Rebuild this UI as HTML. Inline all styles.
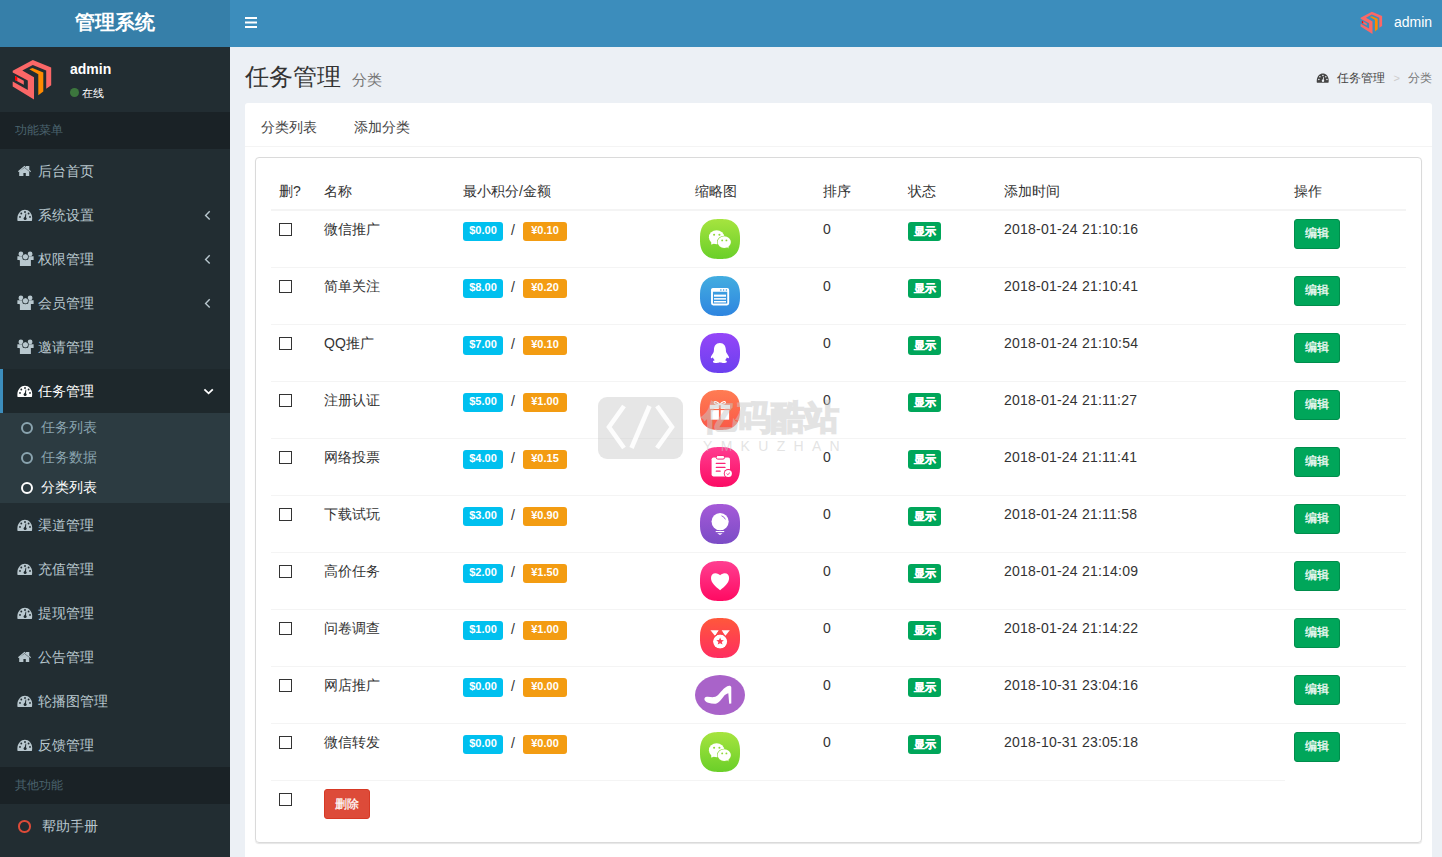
<!DOCTYPE html>
<html><head><meta charset="utf-8"><style>
*{box-sizing:border-box;margin:0;padding:0}
html,body{width:1442px;height:857px;overflow:hidden;background:#ecf0f5;font-family:"Liberation Sans",sans-serif;color:#333;font-size:14px}
.abs{position:absolute}
#logo{position:absolute;left:0;top:0;width:230px;height:47px;background:#367fa9;color:#fff;font-size:20px;font-weight:bold;text-align:center;line-height:45px}
#nav{position:absolute;left:230px;top:0;width:1212px;height:47px;background:#3c8dbc}
#side{position:absolute;left:0;top:47px;width:230px;height:810px;background:#222d32}
.hdr{position:absolute;left:0;width:230px;height:36px;background:#1a2226;color:#4b646f;font-size:12px;line-height:36px;padding-left:15px}
.mi{position:absolute;left:0;width:230px;height:44px;color:#b8c7ce;line-height:44px}
.mic{position:absolute;left:14px;top:11px;width:24px;height:24px;display:block}
.mic svg{position:absolute;top:0;left:0}
.mt{position:absolute;left:38px;top:0}
.chl{position:absolute;left:196px;top:11px;width:24px;height:24px}
.chl svg{position:absolute;top:0;left:0}
.sub{position:absolute;left:0;width:230px;height:30px;color:#8aa4af;line-height:30px}
.sub .o{position:absolute;left:21px;top:10px;width:12px;height:12px;border:2px solid #8aa4af;border-radius:50%}
.sub span.t{position:absolute;left:41px}
#content{position:absolute;left:230px;top:47px;width:1212px;height:810px}
.box{position:absolute;left:245px;top:103px;width:1187px;height:800px;background:#fff;border-radius:3px}
.inner{position:absolute;left:255px;top:157px;width:1167px;height:686px;border:1px solid #dadada;border-radius:4px;box-shadow:0 1px 1px rgba(0,0,0,.1)}
.th{position:absolute;top:182px;font-weight:normal;color:#333;font-size:14px;line-height:18px}
.hl{position:absolute;left:271px;top:209px;width:1135px;height:2px;background:#f4f4f4}
.rl{position:absolute;left:271px;width:1135px;height:1px;background:#f4f4f4}
.cb{position:absolute;left:279px;width:13px;height:13px;border:1.5px solid #333;background:#fff}
.td{position:absolute;font-size:14px;line-height:16px;color:#333}
.bi,.bw{position:absolute;height:19px;border-radius:3px;color:#fff;font-weight:bold;font-size:11px;line-height:17px;text-align:center}
.bi{left:463px;width:40px;background:#00c0ef}
.bw{left:523px;width:44px;background:#f39c12}
.ic{position:absolute;left:700px;width:40px;height:40px;overflow:hidden}
.ic svg{position:absolute;left:0;top:0}
.bs{position:absolute;left:908px;width:33px;height:19px;border-radius:3px;background:#00a65a;color:#fff;font-weight:bold;font-size:11px;line-height:18px;text-align:center;-webkit-text-stroke:.35px #fff}
.be{position:absolute;left:1294px;width:46px;height:30px;border-radius:3px;background:#00a65a;border:1px solid #008d4c;color:#fff;font-size:12px;line-height:27px;text-align:center;-webkit-text-stroke:.25px #fff}
</style></head><body>
<div id="logo">管理系统</div>
<div id="nav">
 <svg class="abs" style="left:15px;top:17px" width="12" height="11" viewBox="0 0 12 11"><g fill="#fff"><rect y="0" width="12" height="2"/><rect y="4.5" width="12" height="2"/><rect y="9" width="12" height="2"/></g></svg>
 <div class="abs" style="left:1127.8px;top:9px;width:50px;height:50px;transform:scale(.558);transform-origin:0 0"><svg width="50" height="50" viewBox="0 0 50 50"><path fill="#fb6767" d="M4.7 15.8L24.8 5 43.2 12.5V30.3L38.2 33.8V15.5L24.8 9.9 14.3 15.5 26 22.2V44.6L4.7 31.5V26.5L19.8 35V25.5L4.7 17.5z"/><path fill="#fb6767" d="M7 21L15.8 25.8V29.7L7 25z"/><path fill="#f00" d="M7 21L9.3 22.3V26.2L7 25z"/><path fill="#ff8a00" d="M21.3 14.3L24.5 12.9 35.3 17.6V36.5L30.3 40.3V19.2z"/></svg></div>
 <div class="abs" style="left:1164px;top:13px;color:#fff;font-size:14px;line-height:18px">admin</div>
</div>
<div id="side">
 <div class="abs" style="left:8px;top:8px"><svg width="50" height="50" viewBox="0 0 50 50"><path fill="#fb6767" d="M4.7 15.8L24.8 5 43.2 12.5V30.3L38.2 33.8V15.5L24.8 9.9 14.3 15.5 26 22.2V44.6L4.7 31.5V26.5L19.8 35V25.5L4.7 17.5z"/><path fill="#fb6767" d="M7 21L15.8 25.8V29.7L7 25z"/><path fill="#f00" d="M7 21L9.3 22.3V26.2L7 25z"/><path fill="#ff8a00" d="M21.3 14.3L24.5 12.9 35.3 17.6V36.5L30.3 40.3V19.2z"/></svg></div>
 <div class="abs" style="left:70px;top:13px;color:#fff;font-weight:bold;font-size:14px;line-height:18px">admin</div>
 <div class="abs" style="left:70px;top:41px;width:9px;height:9px;border-radius:50%;background:#3c763d"></div>
 <div class="abs" style="left:82px;top:39px;color:#fff;font-size:11px;line-height:14px">在线</div>
 <div class="hdr" style="top:65px;height:36.5px;line-height:36px">功能菜单</div>
</div>
<div class="abs" style="left:0;top:0;width:230px;height:857px">
 <div class="mi" style="top:149px"><span class="mic"><svg width="24" height="24" viewBox="0 0 24 24"><path fill="currentColor" d="M3.9 11.3 L10.5 5.7 L12 7 V5.9 H15.3 V9.8 L17.1 11.3 L16.3 12 L10.5 7.2 L4.7 12z M5.2 16.1 V11.5 L10.5 7.7 L15.2 11.5 V16.1 H11.8 V12.9 H9.4 V16.1z"/></svg></span><span class="mt">后台首页</span></div><div class="mi" style="top:193px"><span class="mic"><svg width="24" height="24" viewBox="0 0 24 24"><path fill="currentColor" d="M3.6 17.1 C3.3 16 3.3 15 3.4 13.8 C3.8 9 7.2 5.7 10.9 5.7 C14.8 5.7 18 9 18.2 13.8 C18.2 15 18.1 16 17.8 17.1z"/><g fill="#222d32"><circle cx="11" cy="8" r=".95"/><circle cx="7.3" cy="9.5" r=".95"/><circle cx="14.6" cy="9.5" r=".95"/><circle cx="6" cy="12.9" r=".95"/><circle cx="16" cy="12.9" r=".95"/><circle cx="11.1" cy="14.5" r="1.5"/><path d="M10.5 14.3 L11.6 9.6 L12.3 9.8 L11.9 14.5z"/></g></svg></span><span class="mt">系统设置</span><span class=chl><svg width="24" height="24" viewBox="0 0 24 24"><path d="M13.7 7.3L9.6 11.4l4.1 4.1" stroke="#b8c7ce" stroke-width="1.4" fill="none"/></svg></span></div><div class="mi" style="top:237px"><span class="mic"><svg width="24" height="24" viewBox="0 0 24 24"><g fill="currentColor"><circle cx="6.9" cy="5.9" r="2.4"/><circle cx="16.1" cy="5.9" r="2.4"/><path d="M3.4 8.3 H8.6 L8.9 12 H3.4z"/><path d="M14.4 8.3 H19.6 V12 H14.1z"/><circle cx="11.4" cy="8.8" r="2.8"/><path d="M5.9 12.2 C5.9 11.8 6.3 11.7 7 11.7 H15.8 C16.5 11.7 16.9 11.8 16.9 12.2 V18 H5.9z"/></g><g fill="none" stroke="#222d32" stroke-width=".6"><circle cx="11.4" cy="8.8" r="3.1"/></g></svg></span><span class="mt">权限管理</span><span class=chl><svg width="24" height="24" viewBox="0 0 24 24"><path d="M13.7 7.3L9.6 11.4l4.1 4.1" stroke="#b8c7ce" stroke-width="1.4" fill="none"/></svg></span></div><div class="mi" style="top:281px"><span class="mic"><svg width="24" height="24" viewBox="0 0 24 24"><g fill="currentColor"><circle cx="6.9" cy="5.9" r="2.4"/><circle cx="16.1" cy="5.9" r="2.4"/><path d="M3.4 8.3 H8.6 L8.9 12 H3.4z"/><path d="M14.4 8.3 H19.6 V12 H14.1z"/><circle cx="11.4" cy="8.8" r="2.8"/><path d="M5.9 12.2 C5.9 11.8 6.3 11.7 7 11.7 H15.8 C16.5 11.7 16.9 11.8 16.9 12.2 V18 H5.9z"/></g><g fill="none" stroke="#222d32" stroke-width=".6"><circle cx="11.4" cy="8.8" r="3.1"/></g></svg></span><span class="mt">会员管理</span><span class=chl><svg width="24" height="24" viewBox="0 0 24 24"><path d="M13.7 7.3L9.6 11.4l4.1 4.1" stroke="#b8c7ce" stroke-width="1.4" fill="none"/></svg></span></div><div class="mi" style="top:325px"><span class="mic"><svg width="24" height="24" viewBox="0 0 24 24"><g fill="currentColor"><circle cx="6.9" cy="5.9" r="2.4"/><circle cx="16.1" cy="5.9" r="2.4"/><path d="M3.4 8.3 H8.6 L8.9 12 H3.4z"/><path d="M14.4 8.3 H19.6 V12 H14.1z"/><circle cx="11.4" cy="8.8" r="2.8"/><path d="M5.9 12.2 C5.9 11.8 6.3 11.7 7 11.7 H15.8 C16.5 11.7 16.9 11.8 16.9 12.2 V18 H5.9z"/></g><g fill="none" stroke="#222d32" stroke-width=".6"><circle cx="11.4" cy="8.8" r="3.1"/></g></svg></span><span class="mt">邀请管理</span></div><div class="mi" style="top:503px"><span class="mic"><svg width="24" height="24" viewBox="0 0 24 24"><path fill="currentColor" d="M3.6 17.1 C3.3 16 3.3 15 3.4 13.8 C3.8 9 7.2 5.7 10.9 5.7 C14.8 5.7 18 9 18.2 13.8 C18.2 15 18.1 16 17.8 17.1z"/><g fill="#222d32"><circle cx="11" cy="8" r=".95"/><circle cx="7.3" cy="9.5" r=".95"/><circle cx="14.6" cy="9.5" r=".95"/><circle cx="6" cy="12.9" r=".95"/><circle cx="16" cy="12.9" r=".95"/><circle cx="11.1" cy="14.5" r="1.5"/><path d="M10.5 14.3 L11.6 9.6 L12.3 9.8 L11.9 14.5z"/></g></svg></span><span class="mt">渠道管理</span></div><div class="mi" style="top:547px"><span class="mic"><svg width="24" height="24" viewBox="0 0 24 24"><path fill="currentColor" d="M3.6 17.1 C3.3 16 3.3 15 3.4 13.8 C3.8 9 7.2 5.7 10.9 5.7 C14.8 5.7 18 9 18.2 13.8 C18.2 15 18.1 16 17.8 17.1z"/><g fill="#222d32"><circle cx="11" cy="8" r=".95"/><circle cx="7.3" cy="9.5" r=".95"/><circle cx="14.6" cy="9.5" r=".95"/><circle cx="6" cy="12.9" r=".95"/><circle cx="16" cy="12.9" r=".95"/><circle cx="11.1" cy="14.5" r="1.5"/><path d="M10.5 14.3 L11.6 9.6 L12.3 9.8 L11.9 14.5z"/></g></svg></span><span class="mt">充值管理</span></div><div class="mi" style="top:591px"><span class="mic"><svg width="24" height="24" viewBox="0 0 24 24"><path fill="currentColor" d="M3.6 17.1 C3.3 16 3.3 15 3.4 13.8 C3.8 9 7.2 5.7 10.9 5.7 C14.8 5.7 18 9 18.2 13.8 C18.2 15 18.1 16 17.8 17.1z"/><g fill="#222d32"><circle cx="11" cy="8" r=".95"/><circle cx="7.3" cy="9.5" r=".95"/><circle cx="14.6" cy="9.5" r=".95"/><circle cx="6" cy="12.9" r=".95"/><circle cx="16" cy="12.9" r=".95"/><circle cx="11.1" cy="14.5" r="1.5"/><path d="M10.5 14.3 L11.6 9.6 L12.3 9.8 L11.9 14.5z"/></g></svg></span><span class="mt">提现管理</span></div><div class="mi" style="top:635px"><span class="mic"><svg width="24" height="24" viewBox="0 0 24 24"><path fill="currentColor" d="M3.9 11.3 L10.5 5.7 L12 7 V5.9 H15.3 V9.8 L17.1 11.3 L16.3 12 L10.5 7.2 L4.7 12z M5.2 16.1 V11.5 L10.5 7.7 L15.2 11.5 V16.1 H11.8 V12.9 H9.4 V16.1z"/></svg></span><span class="mt">公告管理</span></div><div class="mi" style="top:679px"><span class="mic"><svg width="24" height="24" viewBox="0 0 24 24"><path fill="currentColor" d="M3.6 17.1 C3.3 16 3.3 15 3.4 13.8 C3.8 9 7.2 5.7 10.9 5.7 C14.8 5.7 18 9 18.2 13.8 C18.2 15 18.1 16 17.8 17.1z"/><g fill="#222d32"><circle cx="11" cy="8" r=".95"/><circle cx="7.3" cy="9.5" r=".95"/><circle cx="14.6" cy="9.5" r=".95"/><circle cx="6" cy="12.9" r=".95"/><circle cx="16" cy="12.9" r=".95"/><circle cx="11.1" cy="14.5" r="1.5"/><path d="M10.5 14.3 L11.6 9.6 L12.3 9.8 L11.9 14.5z"/></g></svg></span><span class="mt">轮播图管理</span></div><div class="mi" style="top:723px"><span class="mic"><svg width="24" height="24" viewBox="0 0 24 24"><path fill="currentColor" d="M3.6 17.1 C3.3 16 3.3 15 3.4 13.8 C3.8 9 7.2 5.7 10.9 5.7 C14.8 5.7 18 9 18.2 13.8 C18.2 15 18.1 16 17.8 17.1z"/><g fill="#222d32"><circle cx="11" cy="8" r=".95"/><circle cx="7.3" cy="9.5" r=".95"/><circle cx="14.6" cy="9.5" r=".95"/><circle cx="6" cy="12.9" r=".95"/><circle cx="16" cy="12.9" r=".95"/><circle cx="11.1" cy="14.5" r="1.5"/><path d="M10.5 14.3 L11.6 9.6 L12.3 9.8 L11.9 14.5z"/></g></svg></span><span class="mt">反馈管理</span></div>
 <div class="abs" style="left:0;top:369px;width:230px;height:44px;background:#1e282c;border-left:3px solid #3c8dbc"></div>
 <div class="mi" style="top:369px;color:#fff"><span class="mic"><svg width="24" height="24" viewBox="0 0 24 24"><path fill="currentColor" d="M3.6 17.1 C3.3 16 3.3 15 3.4 13.8 C3.8 9 7.2 5.7 10.9 5.7 C14.8 5.7 18 9 18.2 13.8 C18.2 15 18.1 16 17.8 17.1z"/><g fill="#1e282c"><circle cx="11" cy="8" r=".95"/><circle cx="7.3" cy="9.5" r=".95"/><circle cx="14.6" cy="9.5" r=".95"/><circle cx="6" cy="12.9" r=".95"/><circle cx="16" cy="12.9" r=".95"/><circle cx="11.1" cy="14.5" r="1.5"/><path d="M10.5 14.3 L11.6 9.6 L12.3 9.8 L11.9 14.5z"/></g></svg></span><span class="mt">任务管理</span><span class="chl"><svg width="24" height="24" viewBox="0 0 24 24"><path d="M8.4 9.3l4.2 4 4.2-4" stroke="#fff" stroke-width="1.8" fill="none"/></svg></span></div>
 <div class="abs" style="left:0;top:413px;width:230px;height:90px;background:#2c3b41"></div>
 <div class="sub" style="top:412px"><span class="o"></span><span class="t">任务列表</span></div>
 <div class="sub" style="top:442px"><span class="o"></span><span class="t">任务数据</span></div>
 <div class="sub" style="top:472px;color:#fff"><span class="o" style="border-color:#fff"></span><span class="t">分类列表</span></div>
 <div class="hdr" style="top:767px;height:37px;line-height:36px">其他功能</div>
 <div class="mi" style="top:804px"><span class="abs" style="left:18px;top:16px;width:12.5px;height:12.5px;border:2.2px solid #dd4b39;border-radius:50%"></span><span class="mt" style="left:42px">帮助手册</span></div>
</div>
<div class="abs" style="left:245px;top:62px;font-size:24px;line-height:30px;color:#333">任务管理</div>
<div class="abs" style="left:352px;top:71px;font-size:15px;line-height:18px;color:#777">分类</div>
<div class="abs" style="left:1314.2px;top:69.2px;width:24px;height:24px;color:#444;transform:scale(.81);transform-origin:0 0"><svg width="24" height="24" viewBox="0 0 24 24"><path fill="currentColor" d="M3.6 17.1 C3.3 16 3.3 15 3.4 13.8 C3.8 9 7.2 5.7 10.9 5.7 C14.8 5.7 18 9 18.2 13.8 C18.2 15 18.1 16 17.8 17.1z"/><g fill="#ecf0f5"><circle cx="11" cy="8" r=".95"/><circle cx="7.3" cy="9.5" r=".95"/><circle cx="14.6" cy="9.5" r=".95"/><circle cx="6" cy="12.9" r=".95"/><circle cx="16" cy="12.9" r=".95"/><circle cx="11.1" cy="14.5" r="1.5"/><path d="M10.5 14.3 L11.6 9.6 L12.3 9.8 L11.9 14.5z"/></g></svg></div>
<div class="abs" style="left:1337px;top:70.5px;font-size:12px;line-height:14px;color:#444">任务管理</div>
<div class="abs" style="left:1393.5px;top:71px;font-size:11px;line-height:14px;color:#ccc">&gt;</div>
<div class="abs" style="left:1408px;top:70.5px;font-size:12px;line-height:14px;color:#777">分类</div>
<div class="box"></div>
<div class="abs" style="left:245px;top:146px;width:1187px;height:1px;background:#f4f4f4"></div>
<div class="abs" style="left:261px;top:119px;font-size:14px;line-height:16px;color:#444">分类列表</div>
<div class="abs" style="left:354px;top:119px;font-size:14px;line-height:16px;color:#444">添加分类</div>
<div class="inner"></div>
<div class="th" style="left:279px">删?</div>
<div class="th" style="left:324px">名称</div>
<div class="th" style="left:463px">最小积分/金额</div>
<div class="th" style="left:695px">缩略图</div>
<div class="th" style="left:823px">排序</div>
<div class="th" style="left:908px">状态</div>
<div class="th" style="left:1004px">添加时间</div>
<div class="th" style="left:1294px">操作</div>
<div class="hl"></div>

<div class="rl" style="top:267px;"></div>
<div class="cb" style="top:223px"></div>
<div class="td" style="left:324px;top:221px">微信推广</div>
<div class="bi" style="top:222px">$0.00</div>
<div class="td" style="left:511px;top:222px">/</div>
<div class="bw" style="top:222px">¥0.10</div>
<div class="ic" style="top:219px;"><svg width="40" height="40" viewBox="0 0 40 40"><defs><linearGradient id="g1" x1="0" y1="0" x2="0" y2="1"><stop offset="0" stop-color="#a6e43f"/><stop offset="1" stop-color="#6acf29"/></linearGradient></defs><path fill="url(#g1)" d="M40.00 20.00 L39.97 22.45 L39.87 24.18 L39.70 25.69 L39.47 27.07 L39.18 28.35 L38.82 29.55 L38.39 30.68 L37.91 31.73 L37.35 32.73 L36.74 33.65 L36.06 34.52 L35.32 35.32 L34.52 36.06 L33.65 36.74 L32.73 37.35 L31.73 37.91 L30.68 38.39 L29.55 38.82 L28.35 39.18 L27.07 39.47 L25.69 39.70 L24.18 39.87 L22.45 39.97 L20.00 40.00 L17.55 39.97 L15.82 39.87 L14.31 39.70 L12.93 39.47 L11.65 39.18 L10.45 38.82 L9.32 38.39 L8.27 37.91 L7.27 37.35 L6.35 36.74 L5.48 36.06 L4.68 35.32 L3.94 34.52 L3.26 33.65 L2.65 32.73 L2.09 31.73 L1.61 30.68 L1.18 29.55 L0.82 28.35 L0.53 27.07 L0.30 25.69 L0.13 24.18 L0.03 22.45 L0.00 20.00 L0.03 17.55 L0.13 15.82 L0.30 14.31 L0.53 12.93 L0.82 11.65 L1.18 10.45 L1.61 9.32 L2.09 8.27 L2.65 7.27 L3.26 6.35 L3.94 5.48 L4.68 4.68 L5.48 3.94 L6.35 3.26 L7.27 2.65 L8.27 2.09 L9.32 1.61 L10.45 1.18 L11.65 0.82 L12.93 0.53 L14.31 0.30 L15.82 0.13 L17.55 0.03 L20.00 0.00 L22.45 0.03 L24.18 0.13 L25.69 0.30 L27.07 0.53 L28.35 0.82 L29.55 1.18 L30.68 1.61 L31.73 2.09 L32.73 2.65 L33.65 3.26 L34.52 3.94 L35.32 4.68 L36.06 5.48 L36.74 6.35 L37.35 7.27 L37.91 8.27 L38.39 9.32 L38.82 10.45 L39.18 11.65 L39.47 12.93 L39.70 14.31 L39.87 15.82 L39.97 17.55Z"/><g fill="#fff"><ellipse cx="16.6" cy="18.3" rx="7.7" ry="7"/><path d="M11 23.5 L11.5 25.8 L14.5 24z"/><ellipse cx="24.25" cy="23.1" rx="7.2" ry="6.4" fill="#8bd736"/><ellipse cx="24.25" cy="23.1" rx="6.65" ry="5.95"/><path d="M26.5 27.5 L28.6 29.6 L28.2 26.5z"/></g><g fill="#8fd838"><circle cx="14.1" cy="15.8" r="1.05"/><circle cx="19.4" cy="15.8" r="1.05"/><circle cx="22.2" cy="21.4" r=".95"/><circle cx="26.4" cy="21.4" r=".95"/></g></svg></div>
<div class="td" style="left:823px;top:221px">0</div>
<div class="bs" style="top:222px">显示</div>
<div class="td" style="left:1004px;top:221px;letter-spacing:.22px">2018-01-24 21:10:16</div>
<div class="be" style="top:219px">编辑</div>

<div class="rl" style="top:324px;"></div>
<div class="cb" style="top:280px"></div>
<div class="td" style="left:324px;top:278px">简单关注</div>
<div class="bi" style="top:279px">$8.00</div>
<div class="td" style="left:511px;top:279px">/</div>
<div class="bw" style="top:279px">¥0.20</div>
<div class="ic" style="top:276px;"><svg width="40" height="40" viewBox="0 0 40 40"><defs><linearGradient id="g2" x1="0" y1="0" x2="0" y2="1"><stop offset="0" stop-color="#43ade0"/><stop offset="1" stop-color="#2e85e0"/></linearGradient></defs><path fill="url(#g2)" d="M40.00 20.00 L39.97 22.45 L39.87 24.18 L39.70 25.69 L39.47 27.07 L39.18 28.35 L38.82 29.55 L38.39 30.68 L37.91 31.73 L37.35 32.73 L36.74 33.65 L36.06 34.52 L35.32 35.32 L34.52 36.06 L33.65 36.74 L32.73 37.35 L31.73 37.91 L30.68 38.39 L29.55 38.82 L28.35 39.18 L27.07 39.47 L25.69 39.70 L24.18 39.87 L22.45 39.97 L20.00 40.00 L17.55 39.97 L15.82 39.87 L14.31 39.70 L12.93 39.47 L11.65 39.18 L10.45 38.82 L9.32 38.39 L8.27 37.91 L7.27 37.35 L6.35 36.74 L5.48 36.06 L4.68 35.32 L3.94 34.52 L3.26 33.65 L2.65 32.73 L2.09 31.73 L1.61 30.68 L1.18 29.55 L0.82 28.35 L0.53 27.07 L0.30 25.69 L0.13 24.18 L0.03 22.45 L0.00 20.00 L0.03 17.55 L0.13 15.82 L0.30 14.31 L0.53 12.93 L0.82 11.65 L1.18 10.45 L1.61 9.32 L2.09 8.27 L2.65 7.27 L3.26 6.35 L3.94 5.48 L4.68 4.68 L5.48 3.94 L6.35 3.26 L7.27 2.65 L8.27 2.09 L9.32 1.61 L10.45 1.18 L11.65 0.82 L12.93 0.53 L14.31 0.30 L15.82 0.13 L17.55 0.03 L20.00 0.00 L22.45 0.03 L24.18 0.13 L25.69 0.30 L27.07 0.53 L28.35 0.82 L29.55 1.18 L30.68 1.61 L31.73 2.09 L32.73 2.65 L33.65 3.26 L34.52 3.94 L35.32 4.68 L36.06 5.48 L36.74 6.35 L37.35 7.27 L37.91 8.27 L38.39 9.32 L38.82 10.45 L39.18 11.65 L39.47 12.93 L39.70 14.31 L39.87 15.82 L39.97 17.55Z"/><rect x="12" y="12.9" width="16.2" height="15.6" rx="1.2" fill="none" stroke="#fff" stroke-width="1.9"/><rect x="11.5" y="12.4" width="17" height="3.4" fill="#fff" rx="1"/><g fill="#3a98e0"><circle cx="20.9" cy="14.1" r=".75"/><circle cx="23.6" cy="14.1" r=".75"/><circle cx="26.4" cy="14.1" r=".75"/></g><g fill="#fff"><rect x="14" y="18.6" width="12" height="2.1"/><rect x="14" y="22.1" width="12" height="1.5"/><rect x="14" y="25" width="12" height="1.5"/></g></svg></div>
<div class="td" style="left:823px;top:278px">0</div>
<div class="bs" style="top:279px">显示</div>
<div class="td" style="left:1004px;top:278px;letter-spacing:.22px">2018-01-24 21:10:41</div>
<div class="be" style="top:276px">编辑</div>

<div class="rl" style="top:381px;"></div>
<div class="cb" style="top:337px"></div>
<div class="td" style="left:324px;top:335px">QQ推广</div>
<div class="bi" style="top:336px">$7.00</div>
<div class="td" style="left:511px;top:336px">/</div>
<div class="bw" style="top:336px">¥0.10</div>
<div class="ic" style="top:333px;"><svg width="40" height="40" viewBox="0 0 40 40"><defs><linearGradient id="g3" x1="0" y1="0" x2="0" y2="1"><stop offset="0" stop-color="#9546f8"/><stop offset="1" stop-color="#6b40ef"/></linearGradient></defs><path fill="url(#g3)" d="M40.00 20.00 L39.97 22.45 L39.87 24.18 L39.70 25.69 L39.47 27.07 L39.18 28.35 L38.82 29.55 L38.39 30.68 L37.91 31.73 L37.35 32.73 L36.74 33.65 L36.06 34.52 L35.32 35.32 L34.52 36.06 L33.65 36.74 L32.73 37.35 L31.73 37.91 L30.68 38.39 L29.55 38.82 L28.35 39.18 L27.07 39.47 L25.69 39.70 L24.18 39.87 L22.45 39.97 L20.00 40.00 L17.55 39.97 L15.82 39.87 L14.31 39.70 L12.93 39.47 L11.65 39.18 L10.45 38.82 L9.32 38.39 L8.27 37.91 L7.27 37.35 L6.35 36.74 L5.48 36.06 L4.68 35.32 L3.94 34.52 L3.26 33.65 L2.65 32.73 L2.09 31.73 L1.61 30.68 L1.18 29.55 L0.82 28.35 L0.53 27.07 L0.30 25.69 L0.13 24.18 L0.03 22.45 L0.00 20.00 L0.03 17.55 L0.13 15.82 L0.30 14.31 L0.53 12.93 L0.82 11.65 L1.18 10.45 L1.61 9.32 L2.09 8.27 L2.65 7.27 L3.26 6.35 L3.94 5.48 L4.68 4.68 L5.48 3.94 L6.35 3.26 L7.27 2.65 L8.27 2.09 L9.32 1.61 L10.45 1.18 L11.65 0.82 L12.93 0.53 L14.31 0.30 L15.82 0.13 L17.55 0.03 L20.00 0.00 L22.45 0.03 L24.18 0.13 L25.69 0.30 L27.07 0.53 L28.35 0.82 L29.55 1.18 L30.68 1.61 L31.73 2.09 L32.73 2.65 L33.65 3.26 L34.52 3.94 L35.32 4.68 L36.06 5.48 L36.74 6.35 L37.35 7.27 L37.91 8.27 L38.39 9.32 L38.82 10.45 L39.18 11.65 L39.47 12.93 L39.70 14.31 L39.87 15.82 L39.97 17.55Z"/><path fill="#fff" d="M19.9 9.9 C15.8 9.9 14.2 13 14 16 C13.9 18 13.8 19 13.2 20 C12.2 21.5 10.8 23.4 10.8 24.5 C10.8 25.2 11.3 25.4 12 25 C12.4 24.8 12.6 24.6 12.9 24.3 C13.1 25.3 13.8 26.4 14.8 27.2 C13.3 27.6 12.8 28.3 13 29 C13.4 30 15.3 30.1 17 30 C18.3 29.9 19 29.5 19.9 29.3 C20.8 29.5 21.5 29.9 22.8 30 C24.5 30.1 26.4 30 26.8 29 C27 28.3 26.5 27.6 25 27.2 C26 26.4 26.7 25.3 26.9 24.3 C27.2 24.6 27.4 24.8 27.8 25 C28.5 25.4 29 25.2 29 24.5 C29 23.4 27.6 21.5 26.6 20 C26 19 25.9 18 25.8 16 C25.6 13 24 9.9 19.9 9.9z"/></svg></div>
<div class="td" style="left:823px;top:335px">0</div>
<div class="bs" style="top:336px">显示</div>
<div class="td" style="left:1004px;top:335px;letter-spacing:.22px">2018-01-24 21:10:54</div>
<div class="be" style="top:333px">编辑</div>

<div class="rl" style="top:438px;"></div>
<div class="cb" style="top:394px"></div>
<div class="td" style="left:324px;top:392px">注册认证</div>
<div class="bi" style="top:393px">$5.00</div>
<div class="td" style="left:511px;top:393px">/</div>
<div class="bw" style="top:393px">¥1.00</div>
<div class="ic" style="top:390px;"><svg width="40" height="40" viewBox="0 0 40 40"><defs><linearGradient id="g4" x1="0" y1="0" x2="0" y2="1"><stop offset="0" stop-color="#ff7c53"/><stop offset="1" stop-color="#fa5847"/></linearGradient></defs><path fill="url(#g4)" d="M40.00 20.00 L39.97 22.45 L39.87 24.18 L39.70 25.69 L39.47 27.07 L39.18 28.35 L38.82 29.55 L38.39 30.68 L37.91 31.73 L37.35 32.73 L36.74 33.65 L36.06 34.52 L35.32 35.32 L34.52 36.06 L33.65 36.74 L32.73 37.35 L31.73 37.91 L30.68 38.39 L29.55 38.82 L28.35 39.18 L27.07 39.47 L25.69 39.70 L24.18 39.87 L22.45 39.97 L20.00 40.00 L17.55 39.97 L15.82 39.87 L14.31 39.70 L12.93 39.47 L11.65 39.18 L10.45 38.82 L9.32 38.39 L8.27 37.91 L7.27 37.35 L6.35 36.74 L5.48 36.06 L4.68 35.32 L3.94 34.52 L3.26 33.65 L2.65 32.73 L2.09 31.73 L1.61 30.68 L1.18 29.55 L0.82 28.35 L0.53 27.07 L0.30 25.69 L0.13 24.18 L0.03 22.45 L0.00 20.00 L0.03 17.55 L0.13 15.82 L0.30 14.31 L0.53 12.93 L0.82 11.65 L1.18 10.45 L1.61 9.32 L2.09 8.27 L2.65 7.27 L3.26 6.35 L3.94 5.48 L4.68 4.68 L5.48 3.94 L6.35 3.26 L7.27 2.65 L8.27 2.09 L9.32 1.61 L10.45 1.18 L11.65 0.82 L12.93 0.53 L14.31 0.30 L15.82 0.13 L17.55 0.03 L20.00 0.00 L22.45 0.03 L24.18 0.13 L25.69 0.30 L27.07 0.53 L28.35 0.82 L29.55 1.18 L30.68 1.61 L31.73 2.09 L32.73 2.65 L33.65 3.26 L34.52 3.94 L35.32 4.68 L36.06 5.48 L36.74 6.35 L37.35 7.27 L37.91 8.27 L38.39 9.32 L38.82 10.45 L39.18 11.65 L39.47 12.93 L39.70 14.31 L39.87 15.82 L39.97 17.55Z"/><g fill="#fff"><rect x="9.9" y="14.9" width="20.1" height="4"/><rect x="10.75" y="20.1" width="18.35" height="9.6"/></g><rect x="18.9" y="14.5" width="1.8" height="16" fill="#fc6a4d"/><path d="M19.8 14.6 C17.5 11.5 14.5 10.8 14.2 12.4 C14 13.6 16 14.4 19.8 14.6 C23.6 14.4 25.6 13.6 25.4 12.4 C25.1 10.8 22.1 11.5 19.8 14.6z" fill="none" stroke="#fff" stroke-width="1.1"/></svg></div>
<div class="td" style="left:823px;top:392px">0</div>
<div class="bs" style="top:393px">显示</div>
<div class="td" style="left:1004px;top:392px;letter-spacing:.22px">2018-01-24 21:11:27</div>
<div class="be" style="top:390px">编辑</div>

<div class="rl" style="top:495px;"></div>
<div class="cb" style="top:451px"></div>
<div class="td" style="left:324px;top:449px">网络投票</div>
<div class="bi" style="top:450px">$4.00</div>
<div class="td" style="left:511px;top:450px">/</div>
<div class="bw" style="top:450px">¥0.15</div>
<div class="ic" style="top:447px;"><svg width="40" height="40" viewBox="0 0 40 40"><defs><linearGradient id="g5" x1="0" y1="0" x2="0" y2="1"><stop offset="0" stop-color="#ff3d90"/><stop offset="1" stop-color="#fb0c64"/></linearGradient></defs><path fill="url(#g5)" d="M40.00 20.00 L39.97 22.45 L39.87 24.18 L39.70 25.69 L39.47 27.07 L39.18 28.35 L38.82 29.55 L38.39 30.68 L37.91 31.73 L37.35 32.73 L36.74 33.65 L36.06 34.52 L35.32 35.32 L34.52 36.06 L33.65 36.74 L32.73 37.35 L31.73 37.91 L30.68 38.39 L29.55 38.82 L28.35 39.18 L27.07 39.47 L25.69 39.70 L24.18 39.87 L22.45 39.97 L20.00 40.00 L17.55 39.97 L15.82 39.87 L14.31 39.70 L12.93 39.47 L11.65 39.18 L10.45 38.82 L9.32 38.39 L8.27 37.91 L7.27 37.35 L6.35 36.74 L5.48 36.06 L4.68 35.32 L3.94 34.52 L3.26 33.65 L2.65 32.73 L2.09 31.73 L1.61 30.68 L1.18 29.55 L0.82 28.35 L0.53 27.07 L0.30 25.69 L0.13 24.18 L0.03 22.45 L0.00 20.00 L0.03 17.55 L0.13 15.82 L0.30 14.31 L0.53 12.93 L0.82 11.65 L1.18 10.45 L1.61 9.32 L2.09 8.27 L2.65 7.27 L3.26 6.35 L3.94 5.48 L4.68 4.68 L5.48 3.94 L6.35 3.26 L7.27 2.65 L8.27 2.09 L9.32 1.61 L10.45 1.18 L11.65 0.82 L12.93 0.53 L14.31 0.30 L15.82 0.13 L17.55 0.03 L20.00 0.00 L22.45 0.03 L24.18 0.13 L25.69 0.30 L27.07 0.53 L28.35 0.82 L29.55 1.18 L30.68 1.61 L31.73 2.09 L32.73 2.65 L33.65 3.26 L34.52 3.94 L35.32 4.68 L36.06 5.48 L36.74 6.35 L37.35 7.27 L37.91 8.27 L38.39 9.32 L38.82 10.45 L39.18 11.65 L39.47 12.93 L39.70 14.31 L39.87 15.82 L39.97 17.55Z"/><rect x="11.6" y="10.4" width="18.4" height="19" rx="1.8" fill="#fff"/><rect x="16.2" y="8.5" width="8.4" height="3.6" rx="1.6" fill="#fff" stroke="#fa2477" stroke-width="1"/><g fill="#fa2477"><rect x="15.7" y="15.7" width="9.9" height="1.3" rx=".6"/><rect x="15.7" y="19.8" width="9.9" height="1.3" rx=".6"/><rect x="15.7" y="23.5" width="5" height="1.3" rx=".6"/></g><circle cx="28.3" cy="26.5" r="4.5" fill="#fa1a6d"/><circle cx="28.3" cy="26.5" r="3.6" fill="#fff"/><path d="M26.6 26.6l1.2 1.1 2.1-2" stroke="#fa2477" stroke-width=".9" fill="none"/></svg></div>
<div class="td" style="left:823px;top:449px">0</div>
<div class="bs" style="top:450px">显示</div>
<div class="td" style="left:1004px;top:449px;letter-spacing:.22px">2018-01-24 21:11:41</div>
<div class="be" style="top:447px">编辑</div>

<div class="rl" style="top:552px;"></div>
<div class="cb" style="top:508px"></div>
<div class="td" style="left:324px;top:506px">下载试玩</div>
<div class="bi" style="top:507px">$3.00</div>
<div class="td" style="left:511px;top:507px">/</div>
<div class="bw" style="top:507px">¥0.90</div>
<div class="ic" style="top:504px;"><svg width="40" height="40" viewBox="0 0 40 40"><defs><linearGradient id="g6" x1="0" y1="0" x2="0" y2="1"><stop offset="0" stop-color="#a55ad8"/><stop offset="1" stop-color="#7b4cc6"/></linearGradient></defs><path fill="url(#g6)" d="M40.00 20.00 L39.97 22.45 L39.87 24.18 L39.70 25.69 L39.47 27.07 L39.18 28.35 L38.82 29.55 L38.39 30.68 L37.91 31.73 L37.35 32.73 L36.74 33.65 L36.06 34.52 L35.32 35.32 L34.52 36.06 L33.65 36.74 L32.73 37.35 L31.73 37.91 L30.68 38.39 L29.55 38.82 L28.35 39.18 L27.07 39.47 L25.69 39.70 L24.18 39.87 L22.45 39.97 L20.00 40.00 L17.55 39.97 L15.82 39.87 L14.31 39.70 L12.93 39.47 L11.65 39.18 L10.45 38.82 L9.32 38.39 L8.27 37.91 L7.27 37.35 L6.35 36.74 L5.48 36.06 L4.68 35.32 L3.94 34.52 L3.26 33.65 L2.65 32.73 L2.09 31.73 L1.61 30.68 L1.18 29.55 L0.82 28.35 L0.53 27.07 L0.30 25.69 L0.13 24.18 L0.03 22.45 L0.00 20.00 L0.03 17.55 L0.13 15.82 L0.30 14.31 L0.53 12.93 L0.82 11.65 L1.18 10.45 L1.61 9.32 L2.09 8.27 L2.65 7.27 L3.26 6.35 L3.94 5.48 L4.68 4.68 L5.48 3.94 L6.35 3.26 L7.27 2.65 L8.27 2.09 L9.32 1.61 L10.45 1.18 L11.65 0.82 L12.93 0.53 L14.31 0.30 L15.82 0.13 L17.55 0.03 L20.00 0.00 L22.45 0.03 L24.18 0.13 L25.69 0.30 L27.07 0.53 L28.35 0.82 L29.55 1.18 L30.68 1.61 L31.73 2.09 L32.73 2.65 L33.65 3.26 L34.52 3.94 L35.32 4.68 L36.06 5.48 L36.74 6.35 L37.35 7.27 L37.91 8.27 L38.39 9.32 L38.82 10.45 L39.18 11.65 L39.47 12.93 L39.70 14.31 L39.87 15.82 L39.97 17.55Z"/><g fill="#fff"><circle cx="20.1" cy="17.6" r="8.6"/><path d="M15.5 23 L24.7 23 L22.5 26 H17.7z"/><rect x="15.7" y="27" width="8.5" height="1.1"/><path d="M17.2 29.3 H22.7 L20 30.9z"/></g><path d="M21.5 11.8 A6.2 6.2 0 0 1 25.4 15.4" stroke="#8f52d0" stroke-width=".9" fill="none"/></svg></div>
<div class="td" style="left:823px;top:506px">0</div>
<div class="bs" style="top:507px">显示</div>
<div class="td" style="left:1004px;top:506px;letter-spacing:.22px">2018-01-24 21:11:58</div>
<div class="be" style="top:504px">编辑</div>

<div class="rl" style="top:609px;"></div>
<div class="cb" style="top:565px"></div>
<div class="td" style="left:324px;top:563px">高价任务</div>
<div class="bi" style="top:564px">$2.00</div>
<div class="td" style="left:511px;top:564px">/</div>
<div class="bw" style="top:564px">¥1.50</div>
<div class="ic" style="top:561px;"><svg width="40" height="40" viewBox="0 0 40 40"><defs><linearGradient id="g7" x1="0" y1="0" x2="0" y2="1"><stop offset="0" stop-color="#ff3f91"/><stop offset="1" stop-color="#ff0a62"/></linearGradient></defs><path fill="url(#g7)" d="M40.00 20.00 L39.97 22.45 L39.87 24.18 L39.70 25.69 L39.47 27.07 L39.18 28.35 L38.82 29.55 L38.39 30.68 L37.91 31.73 L37.35 32.73 L36.74 33.65 L36.06 34.52 L35.32 35.32 L34.52 36.06 L33.65 36.74 L32.73 37.35 L31.73 37.91 L30.68 38.39 L29.55 38.82 L28.35 39.18 L27.07 39.47 L25.69 39.70 L24.18 39.87 L22.45 39.97 L20.00 40.00 L17.55 39.97 L15.82 39.87 L14.31 39.70 L12.93 39.47 L11.65 39.18 L10.45 38.82 L9.32 38.39 L8.27 37.91 L7.27 37.35 L6.35 36.74 L5.48 36.06 L4.68 35.32 L3.94 34.52 L3.26 33.65 L2.65 32.73 L2.09 31.73 L1.61 30.68 L1.18 29.55 L0.82 28.35 L0.53 27.07 L0.30 25.69 L0.13 24.18 L0.03 22.45 L0.00 20.00 L0.03 17.55 L0.13 15.82 L0.30 14.31 L0.53 12.93 L0.82 11.65 L1.18 10.45 L1.61 9.32 L2.09 8.27 L2.65 7.27 L3.26 6.35 L3.94 5.48 L4.68 4.68 L5.48 3.94 L6.35 3.26 L7.27 2.65 L8.27 2.09 L9.32 1.61 L10.45 1.18 L11.65 0.82 L12.93 0.53 L14.31 0.30 L15.82 0.13 L17.55 0.03 L20.00 0.00 L22.45 0.03 L24.18 0.13 L25.69 0.30 L27.07 0.53 L28.35 0.82 L29.55 1.18 L30.68 1.61 L31.73 2.09 L32.73 2.65 L33.65 3.26 L34.52 3.94 L35.32 4.68 L36.06 5.48 L36.74 6.35 L37.35 7.27 L37.91 8.27 L38.39 9.32 L38.82 10.45 L39.18 11.65 L39.47 12.93 L39.70 14.31 L39.87 15.82 L39.97 17.55Z"/><path fill="#fff" d="M20.1 29.2 C15.5 25.5 11 22 11 17 C11 14 12.8 12.2 15.5 12.2 C17.6 12.2 19 13.2 20.1 14.3 C21.2 13.2 22.6 12.2 24.7 12.2 C27.4 12.2 29.1 14 29.1 17 C29.1 22 24.7 25.5 20.1 29.2z"/></svg></div>
<div class="td" style="left:823px;top:563px">0</div>
<div class="bs" style="top:564px">显示</div>
<div class="td" style="left:1004px;top:563px;letter-spacing:.22px">2018-01-24 21:14:09</div>
<div class="be" style="top:561px">编辑</div>

<div class="rl" style="top:666px;"></div>
<div class="cb" style="top:622px"></div>
<div class="td" style="left:324px;top:620px">问卷调查</div>
<div class="bi" style="top:621px">$1.00</div>
<div class="td" style="left:511px;top:621px">/</div>
<div class="bw" style="top:621px">¥1.00</div>
<div class="ic" style="top:618px;"><svg width="40" height="40" viewBox="0 0 40 40"><defs><linearGradient id="g8" x1="0" y1="0" x2="0" y2="1"><stop offset="0" stop-color="#ff583b"/><stop offset="1" stop-color="#ff2d60"/></linearGradient></defs><path fill="url(#g8)" d="M40.00 20.00 L39.97 22.45 L39.87 24.18 L39.70 25.69 L39.47 27.07 L39.18 28.35 L38.82 29.55 L38.39 30.68 L37.91 31.73 L37.35 32.73 L36.74 33.65 L36.06 34.52 L35.32 35.32 L34.52 36.06 L33.65 36.74 L32.73 37.35 L31.73 37.91 L30.68 38.39 L29.55 38.82 L28.35 39.18 L27.07 39.47 L25.69 39.70 L24.18 39.87 L22.45 39.97 L20.00 40.00 L17.55 39.97 L15.82 39.87 L14.31 39.70 L12.93 39.47 L11.65 39.18 L10.45 38.82 L9.32 38.39 L8.27 37.91 L7.27 37.35 L6.35 36.74 L5.48 36.06 L4.68 35.32 L3.94 34.52 L3.26 33.65 L2.65 32.73 L2.09 31.73 L1.61 30.68 L1.18 29.55 L0.82 28.35 L0.53 27.07 L0.30 25.69 L0.13 24.18 L0.03 22.45 L0.00 20.00 L0.03 17.55 L0.13 15.82 L0.30 14.31 L0.53 12.93 L0.82 11.65 L1.18 10.45 L1.61 9.32 L2.09 8.27 L2.65 7.27 L3.26 6.35 L3.94 5.48 L4.68 4.68 L5.48 3.94 L6.35 3.26 L7.27 2.65 L8.27 2.09 L9.32 1.61 L10.45 1.18 L11.65 0.82 L12.93 0.53 L14.31 0.30 L15.82 0.13 L17.55 0.03 L20.00 0.00 L22.45 0.03 L24.18 0.13 L25.69 0.30 L27.07 0.53 L28.35 0.82 L29.55 1.18 L30.68 1.61 L31.73 2.09 L32.73 2.65 L33.65 3.26 L34.52 3.94 L35.32 4.68 L36.06 5.48 L36.74 6.35 L37.35 7.27 L37.91 8.27 L38.39 9.32 L38.82 10.45 L39.18 11.65 L39.47 12.93 L39.70 14.31 L39.87 15.82 L39.97 17.55Z"/><g fill="#fff"><path d="M10.5 12.3 H19 L15.3 18.2z"/><path d="M21.2 12.3 H29.8 L25 18.2z"/><circle cx="20.1" cy="23.6" r="7"/></g><path d="M15.3 18.4 L19.4 12 M25 18.4 L21 12" stroke="#fd4a4a" stroke-width="1"/><circle cx="20.1" cy="23.6" r="7.8" fill="none" stroke="#fe3f4f" stroke-width="1"/><path fill="#fe3c54" d="M20.1 19.5 L21.2 22 L23.9 22.2 L21.8 24 L22.5 26.6 L20.1 25.2 L17.7 26.6 L18.4 24 L16.3 22.2 L19 22z"/></svg></div>
<div class="td" style="left:823px;top:620px">0</div>
<div class="bs" style="top:621px">显示</div>
<div class="td" style="left:1004px;top:620px;letter-spacing:.22px">2018-01-24 21:14:22</div>
<div class="be" style="top:618px">编辑</div>

<div class="rl" style="top:723px;"></div>
<div class="cb" style="top:679px"></div>
<div class="td" style="left:324px;top:677px">网店推广</div>
<div class="bi" style="top:678px">$0.00</div>
<div class="td" style="left:511px;top:678px">/</div>
<div class="bw" style="top:678px">¥0.00</div>
<div class="ic" style="top:675px;width:50px;left:695px"><svg width="50" height="40" viewBox="0 0 50 40"><ellipse cx="25" cy="20" rx="25" ry="20" fill="#a963c9"/><path fill="#fff" d="M9.4 23.9 C9.6 22.6 10.6 21.8 11.8 21.8 C14 21.6 16.5 22.3 18.8 22.1 C21 21.9 22.6 20.7 24.4 18.6 C26.5 16.2 28.3 14 30 12.8 C31.5 11.7 33 10.8 34.2 10.8 C35.4 10.8 36.3 11.4 36.3 12.6 L36.3 28.4 L34.2 28.8 L33.3 18.3 C31.5 18.6 29.8 20 28.6 21.5 C27 23.4 25.8 25.4 24.4 26.4 C22.8 27.8 21.3 28.8 19.5 28.8 C17.3 28.8 15.2 28.4 13.2 27.7 C11.3 27 9.3 25.7 9.4 23.9 Z"/></svg></div>
<div class="td" style="left:823px;top:677px">0</div>
<div class="bs" style="top:678px">显示</div>
<div class="td" style="left:1004px;top:677px;letter-spacing:.22px">2018-10-31 23:04:16</div>
<div class="be" style="top:675px">编辑</div>

<div class="rl" style="top:780px;width:1014px"></div>
<div class="cb" style="top:736px"></div>
<div class="td" style="left:324px;top:734px">微信转发</div>
<div class="bi" style="top:735px">$0.00</div>
<div class="td" style="left:511px;top:735px">/</div>
<div class="bw" style="top:735px">¥0.00</div>
<div class="ic" style="top:732px;"><svg width="40" height="40" viewBox="0 0 40 40"><defs><linearGradient id="g9" x1="0" y1="0" x2="0" y2="1"><stop offset="0" stop-color="#a6e43f"/><stop offset="1" stop-color="#6acf29"/></linearGradient></defs><path fill="url(#g9)" d="M40.00 20.00 L39.97 22.45 L39.87 24.18 L39.70 25.69 L39.47 27.07 L39.18 28.35 L38.82 29.55 L38.39 30.68 L37.91 31.73 L37.35 32.73 L36.74 33.65 L36.06 34.52 L35.32 35.32 L34.52 36.06 L33.65 36.74 L32.73 37.35 L31.73 37.91 L30.68 38.39 L29.55 38.82 L28.35 39.18 L27.07 39.47 L25.69 39.70 L24.18 39.87 L22.45 39.97 L20.00 40.00 L17.55 39.97 L15.82 39.87 L14.31 39.70 L12.93 39.47 L11.65 39.18 L10.45 38.82 L9.32 38.39 L8.27 37.91 L7.27 37.35 L6.35 36.74 L5.48 36.06 L4.68 35.32 L3.94 34.52 L3.26 33.65 L2.65 32.73 L2.09 31.73 L1.61 30.68 L1.18 29.55 L0.82 28.35 L0.53 27.07 L0.30 25.69 L0.13 24.18 L0.03 22.45 L0.00 20.00 L0.03 17.55 L0.13 15.82 L0.30 14.31 L0.53 12.93 L0.82 11.65 L1.18 10.45 L1.61 9.32 L2.09 8.27 L2.65 7.27 L3.26 6.35 L3.94 5.48 L4.68 4.68 L5.48 3.94 L6.35 3.26 L7.27 2.65 L8.27 2.09 L9.32 1.61 L10.45 1.18 L11.65 0.82 L12.93 0.53 L14.31 0.30 L15.82 0.13 L17.55 0.03 L20.00 0.00 L22.45 0.03 L24.18 0.13 L25.69 0.30 L27.07 0.53 L28.35 0.82 L29.55 1.18 L30.68 1.61 L31.73 2.09 L32.73 2.65 L33.65 3.26 L34.52 3.94 L35.32 4.68 L36.06 5.48 L36.74 6.35 L37.35 7.27 L37.91 8.27 L38.39 9.32 L38.82 10.45 L39.18 11.65 L39.47 12.93 L39.70 14.31 L39.87 15.82 L39.97 17.55Z"/><g fill="#fff"><ellipse cx="16.6" cy="18.3" rx="7.7" ry="7"/><path d="M11 23.5 L11.5 25.8 L14.5 24z"/><ellipse cx="24.25" cy="23.1" rx="7.2" ry="6.4" fill="#8bd736"/><ellipse cx="24.25" cy="23.1" rx="6.65" ry="5.95"/><path d="M26.5 27.5 L28.6 29.6 L28.2 26.5z"/></g><g fill="#8fd838"><circle cx="14.1" cy="15.8" r="1.05"/><circle cx="19.4" cy="15.8" r="1.05"/><circle cx="22.2" cy="21.4" r=".95"/><circle cx="26.4" cy="21.4" r=".95"/></g></svg></div>
<div class="td" style="left:823px;top:734px">0</div>
<div class="bs" style="top:735px">显示</div>
<div class="td" style="left:1004px;top:734px;letter-spacing:.22px">2018-10-31 23:05:18</div>
<div class="be" style="top:732px">编辑</div>

<div class="cb" style="top:793px"></div>
<div class="abs" style="left:324px;top:789px;width:46px;height:30px;border-radius:3px;background:#dd4b39;border:1px solid #d73925;color:#fff;font-size:12px;line-height:28px;text-align:center;-webkit-text-stroke:.25px #fff">删除</div>
<div class="abs" style="left:598px;top:397px;width:85px;height:62px;border-radius:9px;background:rgba(200,200,200,.45)"></div>
<svg class="abs" style="left:598px;top:397px" width="85" height="62" viewBox="0 0 85 62"><g fill="none" stroke="rgba(255,255,255,.9)" stroke-width="4.6" stroke-linejoin="miter"><path d="M26 9 L11 30 L26 51"/><path d="M59 9 L74 30 L59 51"/><path d="M51.5 9 L33.5 51"/></g></svg>
<div class="abs" style="left:703px;top:394px;font-size:34px;line-height:46px;font-weight:bold;color:#c8c8c8;-webkit-text-stroke:1.6px #c8c8c8;opacity:.5;letter-spacing:0px;white-space:nowrap">亿码酷站</div>
<div class="abs" style="left:703px;top:439px;font-size:14px;line-height:14px;color:rgba(200,200,200,.5);letter-spacing:8.3px;white-space:nowrap">YMKUZHAN</div>
<div class="abs" style="left:1112px;top:794px;font-size:28px;line-height:32px;color:rgba(0,0,0,.025);white-space:nowrap">@图习网 | Div800.com</div>
</body></html>
